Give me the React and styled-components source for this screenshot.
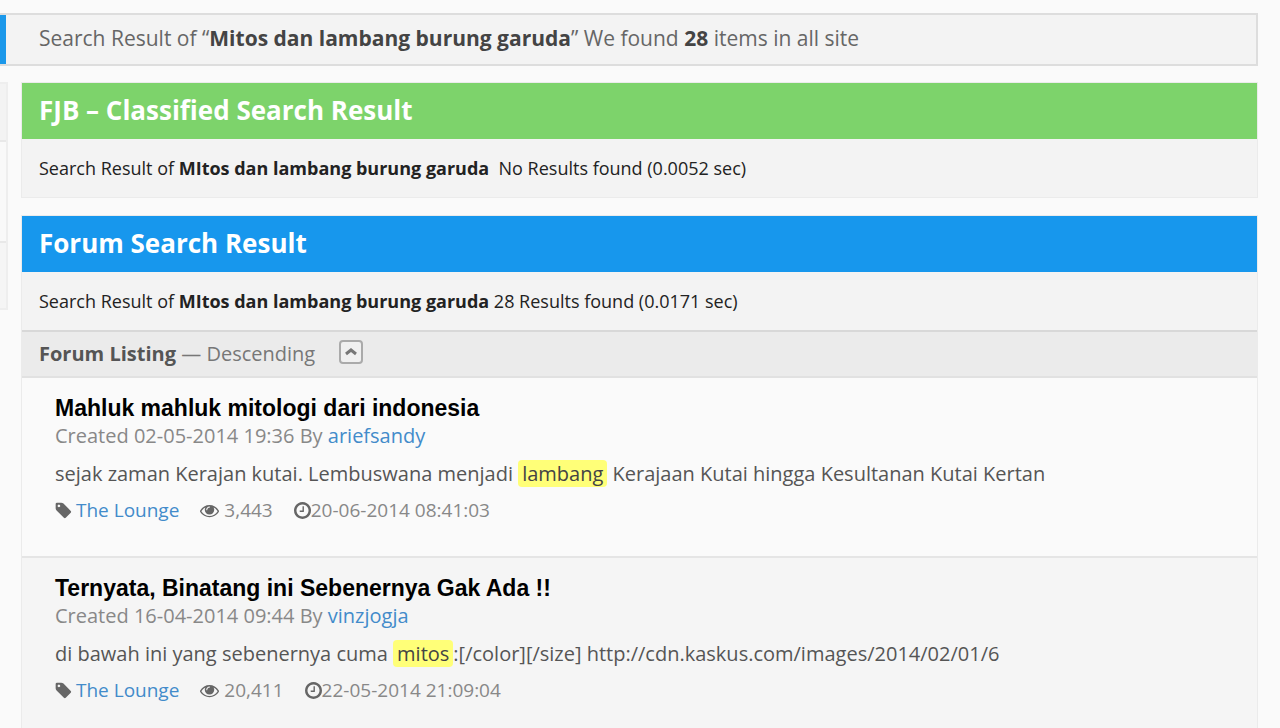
import styled, { createGlobalStyle } from 'styled-components'

const GlobalStyle = createGlobalStyle`
  * {
    box-sizing: border-box;
  }

  body {
    margin: 0;
    background: #fafafa;
    color: #666;
    font-family: 'Open Sans', sans-serif;
    font-size: 20px;
    line-height: 28px;
    overflow: hidden;
  }

  a {
    color: #428bca;
    text-decoration: none;
  }
`

const Page = styled.div`
  padding: 13px 22px 0 0;
`

const Summary = styled.p`
  margin: 0 0 16px;
  padding: 9px 39px 12px;
  background: #f3f3f3;
  border: 2px solid #ddd;
  border-left: 0;
  box-shadow: inset 6px 0 #1b98ea;
  font-size: 21px;

  strong {
    color: #444;
  }
`

const Columns = styled.div`
  display: flex;
  align-items: flex-start;
  gap: 13px;
`

const Sidebar = styled.aside`
  flex: 0 0 8px;
  border: 2px solid #eee;
  border-left: 0;
`

const SidebarItem = styled.div`
  height: ${(props) => props.$height}px;
  background: ${(props) => props.$background || '#f9f9f9'};

  & + & {
    border-top: 2px solid #e8e8e8;
  }
`

const Main = styled.main`
  flex: 1;
  min-width: 0;
`

const Panel = styled.section`
  margin-bottom: 17px;
  background: #f3f3f3;
  border: 1px solid #ebebeb;
`

const PanelTitle = styled.h2`
  margin: 0;
  padding: 9px 17px 11px;
  background: ${(props) => props.$color};
  color: white;
  font-size: 26px;
  line-height: 36px;
`

const PanelInfo = styled.p`
  margin: 0;
  padding: 15px 17px;
  color: #222;
  font-size: 18px;
  white-space: pre-wrap;
`

const ListHeader = styled.div`
  display: flex;
  align-items: center;
  padding: 8px 17px;
  background: #ebebeb;
  border-top: 2px solid #d8d8d8;
  border-bottom: 2px solid #e1e1e1;
  color: #777;

  strong {
    color: #555;
  }
`

const SortButton = styled.button`
  display: flex;
  align-items: center;
  justify-content: center;
  width: 24px;
  height: 24px;
  margin: 0 0 4px 24px;
  padding: 0;
  background: #f0f0f0;
  border: 2px solid #aaa;
  border-radius: 4px;
  color: #777;
`

const Thread = styled.article`
  height: 180px;
  padding: 16px 33px;
  background: ${(props) => (props.$odd ? '#f5f5f5' : '#fafafa')};
  border-bottom: 2px solid #e5e5e5;
`

const ThreadTitle = styled.h3`
  margin: 0;
  color: black;
  font-family: 'Liberation Sans', sans-serif;
  font-size: 23px;
`

const Created = styled.p`
  margin: 0 0 10px;
  color: #888;
`

const Excerpt = styled.p`
  margin: 0 0 8px;
  color: #555;

  mark {
    padding: 0 4px;
    background: #ffff78;
    border-radius: 4px;
    color: #444;
  }
`

const Meta = styled.div`
  display: flex;
  gap: 21px;
  color: #888;
  font-size: 19px;
`

const MetaItem = styled.span`
  display: flex;
  align-items: center;
  gap: ${(props) => props.$gap || 0}px;
`

const Icon = styled.svg`
  width: ${(props) => props.$size}px;
  height: ${(props) => props.$size}px;
  fill: #666;
`

const icons = {
  tag: 'M576 448q0-53-37.5-90.5t-90.5-37.5-90.5 37.5-37.5 90.5 37.5 90.5 90.5 37.5 90.5-37.5 37.5-90.5zm1067 576q0 53-37 90l-491 492q-39 37-91 37-53 0-90-37l-715-716q-38-37-64.5-101t-26.5-117v-416q0-52 38-90t90-38h416q53 0 117 26.5t102 64.5l715 714q37 39 37 91z',
  eye: 'M1664 960q-152-236-381-353 61 104 61 225 0 185-131.5 316.5t-316.5 131.5-316.5-131.5-131.5-316.5q0-121 61-225-229 117-381 353 133 205 333.5 326.5t434.5 121.5 434.5-121.5 333.5-326.5zm-720-384q0-20-14-34t-34-14q-125 0-214.5 89.5t-89.5 214.5q0 20 14 34t34 14 34-14 14-34q0-86 61-147t147-61q20 0 34-14t14-34zm848 384q0 34-20 69-140 230-376.5 368.5t-499.5 138.5-499.5-139-376.5-368q-20-35-20-69t20-69q140-229 376.5-368t499.5-139 499.5 139 376.5 368q20 35 20 69z',
  clock: 'M1024 544v448q0 14-9 23t-23 9h-320q-14 0-23-9t-9-23v-64q0-14 9-23t23-9h224v-352q0-14 9-23t23-9h64q14 0 23 9t9 23zm416 352q0-148-73-273t-198-198-273-73-273 73-198 198-73 273 73 273 198 198 273 73 273-73 198-198 73-273zm224 0q0 209-103 385.5t-279.5 279.5-385.5 103-385.5-103-279.5-279.5-103-385.5 103-385.5 279.5-279.5 385.5-103 385.5 103 279.5 279.5 103 385.5z',
}

const threads = [
  {
    id: 1,
    title: 'Mahluk mahluk mitologi dari indonesia',
    created: '02-05-2014 19:36',
    author: 'ariefsandy',
    before: 'sejak zaman Kerajan kutai. Lembuswana menjadi ',
    match: 'lambang',
    after: ' Kerajaan Kutai hingga Kesultanan Kutai Kertan',
    forum: 'The Lounge',
    views: '3,443',
    updated: '20-06-2014 08:41:03',
  },
  {
    id: 2,
    title: 'Ternyata, Binatang ini Sebenernya Gak Ada !!',
    created: '16-04-2014 09:44',
    author: 'vinzjogja',
    before: 'di bawah ini yang sebenernya cuma ',
    match: 'mitos',
    after: ':[/color][/size] http://cdn.kaskus.com/images/2014/02/01/6',
    forum: 'The Lounge',
    views: '20,411',
    updated: '22-05-2014 21:09:04',
  },
]

const MetaIcon = ({ name, size, viewBox }) => (
  <Icon viewBox={viewBox || '0 0 1792 1792'} $size={size} aria-hidden="true">
    <path d={icons[name]} />
  </Icon>
)

const ThreadRow = ({ thread, odd }) => (
  <Thread $odd={odd}>
    <ThreadTitle>{thread.title}</ThreadTitle>
    <Created>
      Created {thread.created} By <a href="#">{thread.author}</a>
    </Created>
    <Excerpt>
      {thread.before}
      <mark>{thread.match}</mark>
      {thread.after}
    </Excerpt>
    <Meta>
      <MetaItem $gap={4}>
        <MetaIcon name="tag" size={17} viewBox="64 64 1664 1664" />
        <a href="#">{thread.forum}</a>
      </MetaItem>
      <MetaItem $gap={5}>
        <MetaIcon name="eye" size={19} />
        {thread.views}
      </MetaItem>
      <MetaItem>
        <MetaIcon name="clock" size={17} viewBox="128 128 1536 1536" />
        {thread.updated}
      </MetaItem>
    </Meta>
  </Thread>
)

const App = () => {
  return (
    <>
      <GlobalStyle />
      <Page>
        <Summary>
          Search Result of “<strong>Mitos dan lambang burung garuda</strong>” We
          found <strong>28</strong> items in all site
        </Summary>
        <Columns>
          <Sidebar>
            <SidebarItem $height={56} $background="#f3f3f3" />
            <SidebarItem $height={101} />
            <SidebarItem $height={67} $background="#f5f5f5" />
          </Sidebar>
          <Main>
            <Panel>
              <PanelTitle $color="#7dd36b">
                FJB – Classified Search Result
              </PanelTitle>
              <PanelInfo>
                Search Result of{' '}
                <strong>MItos dan lambang burung garuda</strong>
                {'  No Results found (0.0052 sec)'}
              </PanelInfo>
            </Panel>
            <Panel>
              <PanelTitle $color="#1797ed">Forum Search Result</PanelTitle>
              <PanelInfo>
                Search Result of{' '}
                <strong>MItos dan lambang burung garuda</strong> 28 Results
                found (0.0171 sec)
              </PanelInfo>
              <ListHeader>
                <span>
                  <strong>Forum Listing</strong> — Descending
                </span>
                <SortButton type="button" aria-label="Sort ascending">
                  <svg width="14" height="10" viewBox="0 0 14 10">
                    <path
                      d="M2 7l5-4 5 4"
                      fill="none"
                      stroke="currentColor"
                      strokeWidth="3"
                    />
                  </svg>
                </SortButton>
              </ListHeader>
              {threads.map((thread, index) => (
                <ThreadRow
                  key={thread.id}
                  thread={thread}
                  odd={index % 2 === 1}
                />
              ))}
            </Panel>
          </Main>
        </Columns>
      </Page>
    </>
  )
}

export default App
